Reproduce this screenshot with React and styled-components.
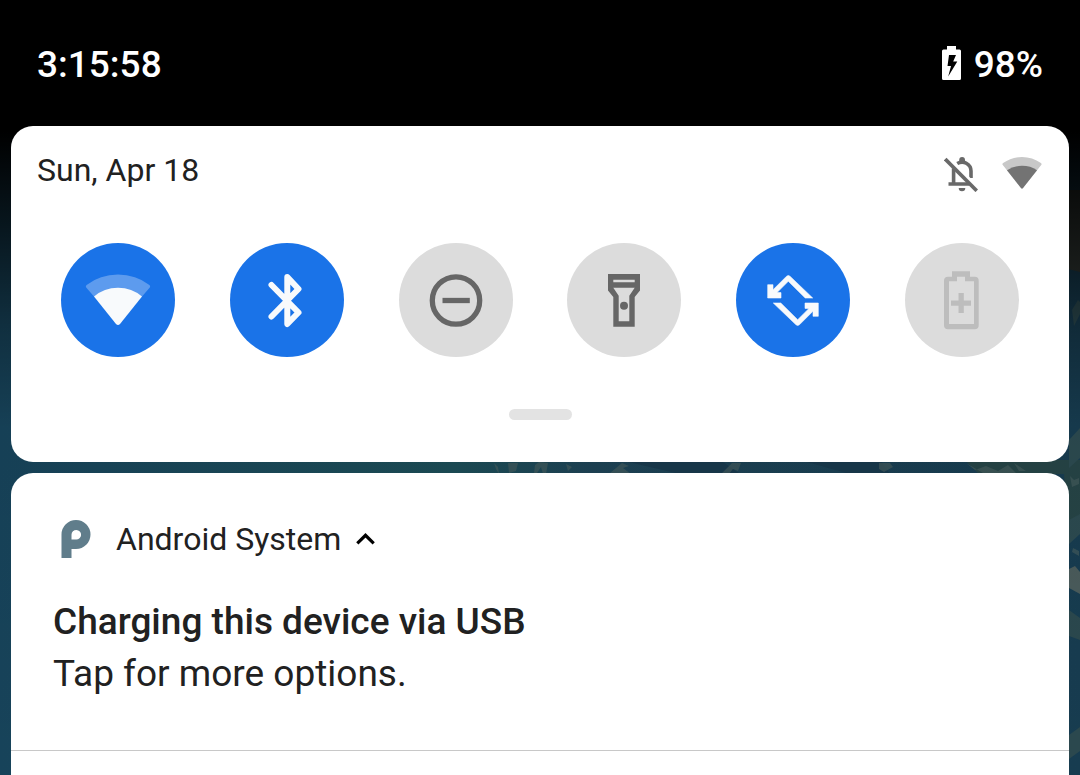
import React from "react";
import styled, { createGlobalStyle } from "styled-components";

const GlobalStyle = createGlobalStyle`
  * { box-sizing: border-box; }
  body {
    margin: 0;
    background: #000;
    font-family: Roboto, "Liberation Sans", sans-serif;
    color: #212121;
  }
  button { font: inherit; color: inherit; border: 0; padding: 0; background: none; cursor: pointer; }
  svg { display: block; flex: none; }
`;

const Screen = styled.div`
  position: relative;
  min-height: 100vh;
  display: flex;
  flex-direction: column;
`;

const WallpaperArt = styled.svg`
  position: absolute;
  inset: 0;
  width: 100%;
  height: 100%;
  z-index: -1;
`;

const StatusBar = styled.header`
  display: flex;
  align-items: center;
  justify-content: space-between;
  padding: 43px 37px 39px;
  line-height: 44px;
  font-size: 37px;
  font-weight: 500;
  color: #fff;
`;

const BatteryStatus = styled.div`
  display: flex;
  align-items: flex-start;
  gap: 13px;

  svg { margin-top: 3px; }
`;

const Shade = styled.main`
  flex: 1;
  display: flex;
  flex-direction: column;
  gap: 11px;
  padding: 0 11px;
`;

const QuickSettings = styled.section`
  display: flex;
  flex-direction: column;
  background: #fff;
  border-radius: 22px;
  padding: 24px 0 42px;
`;

const DateRow = styled.div`
  display: flex;
  justify-content: space-between;
  padding: 0 27px 0 26px;
  line-height: 40px;
  font-size: 32px;
`;

const DateIcons = styled.div`
  display: flex;
  align-items: flex-start;
  gap: 24px;
  padding-top: 7px;
`;

const Tiles = styled.div`
  display: flex;
  justify-content: space-between;
  padding: 51px 50px 52px;
`;

const TileButton = styled.button`
  width: 114px;
  height: 114px;
  border-radius: 50%;
  background: ${(p) => (p.$on ? "#1a73e8" : "#dcdcdc")};
  color: ${(p) => (p.$on ? "#f8fafc" : p.$dim ? "#bdbdbd" : "#666")};
`;

const Handle = styled.button`
  align-self: center;
  width: 63px;
  height: 11px;
  border-radius: 6px;
  && { background: #e3e3e3; }
`;

const Notifications = styled.section`
  flex: 1;
  background: #fff;
  border-radius: 22px 22px 0 0;
`;

const Notification = styled.article`
  padding: 43px 42px 50px;
  border-bottom: 1px solid #c8c8c8;
`;

const AppRow = styled.button`
  display: flex;
  align-items: center;
  && { padding-left: 8px; }
  font-size: 32px;
  line-height: 46px;
`;

const AppName = styled.span`
  margin: 0 15px 0 25px;
`;

const Title = styled.h2`
  margin: 34px 0 0;
  font-size: 37px;
  line-height: 52px;
  font-weight: 500;
`;

const Message = styled.p`
  margin: 0;
  font-size: 37px;
  line-height: 52px;
`;

function Wallpaper() {
  return (
    <WallpaperArt viewBox="0 0 1080 775" preserveAspectRatio="none" aria-hidden="true">
      <defs>
        <linearGradient id="sea" x1="0" x2="1" y1="0" y2="0">
          <stop offset="0" stopColor="#17435a" />
          <stop offset="0.42" stopColor="#1c4c56" />
          <stop offset="0.55" stopColor="#1d4254" />
          <stop offset="1" stopColor="#173c50" />
        </linearGradient>
        <linearGradient id="scrim" x1="0" x2="0" y1="0" y2="1">
          <stop offset="0" stopColor="#000" />
          <stop offset="0.17" stopColor="#000" />
          <stop offset="0.3" stopColor="#000" stopOpacity="0.65" />
          <stop offset="0.42" stopColor="#000" stopOpacity="0.3" />
          <stop offset="0.55" stopColor="#000" stopOpacity="0.05" />
          <stop offset="1" stopColor="#000" stopOpacity="0" />
        </linearGradient>
      </defs>
      <rect width="1080" height="775" fill="url(#sea)" />
      <path d="M620 460l60 14h60l-20-14zM800 460l50 14h40l-10-14z" fill="#18384b" />
      <path d="M965 460h115v70l-12 10-4-66h-85z" fill="#264446" />
      <path d="M1064 190h16v82l-16-4z" fill="#333a36" />
      <path d="M1072 310l6-10 2 2v12l-6 12zM1069 440l11-12v30l-11 10zM1069 520l11-6v20l-11 10z" fill="#2c4a50" />
      <path d="M1069 569l6-3 5 6v22l-11-6z" fill="#4a5b5b" />
      <path d="M1069 610l11 8v22l-11-4zM1069 735l11-8v24l-11 8z" fill="#2b484e" />
      <g fill="#475d5e" opacity="0.6">
        <path d="M494 463l4 4 1 7-3-5zM508 463h10l-2 8-7 2zM535 465l4-3 9 1-2 11h-3l-2-7-4 6h-3zM566 464l6 3-4 4zM610 473l12-10 7 3-6 2 8 6zM722 473l10-10h9l-3 8-5-2-4 5zM879 463h11l3 4-9 5-5-3zM966 463l9 7 11-4 12 5 10-6 8 8h-33zM1014 463l12 8h-7z" />
        <path d="M1070 476l4 4 5-2v6l-7 3zM1073 548l6 3v5l-7-4z" />
      </g>
      <rect width="1080" height="775" fill="url(#scrim)" />
    </WallpaperArt>
  );
}

const BatteryCharging = () => (
  <svg width="19" height="34" viewBox="0 0 19 34" fill="#fff" aria-hidden="true">
    <path
      fillRule="evenodd"
      d="M5 0h9v3.500h3.500Q19 3.500 19 5v27.500Q19 34 17.500 34h-16Q0 34 0 32.500V5q0-1.500 1.500-1.500H5zM7 9L5.500 20H9L6.200 30.500 15.300 15.500H11.200L14 9z"
    />
  </svg>
);

const BellOff = () => (
  <svg width="34" height="35" viewBox="0 0 34 35" fill="none" stroke="#696969" aria-hidden="true">
    <path d="M9.600 11.500V27M4.500 27H25M13.200 6.500Q18 3.800 22.300 6.200 27 8.800 27 14V21" strokeWidth="3.600" />
    <path d="M15.200 4.500V3a2.900 2.900 0 0 1 5.800 0V4.500zM14.700 31h6.600a3.300 3.300 0 0 1-6.600 0z" fill="#696969" stroke="none" />
    <path d="M4.500 0.500L34 30.500" stroke="#fff" strokeWidth="2.500" />
    <path d="M1.200 2L32.800 33.800" strokeWidth="3.700" />
  </svg>
);

const WifiStatus = () => (
  <svg width="40" height="32" viewBox="0 0 40 32" aria-hidden="true">
    <path d="M0.800 8Q-0.100 7 1.100 6.100 9.500 0 20 0T38.900 6.100Q40.100 7 39.200 8L21 31Q20 32.200 19 31z" fill="#c8c8c8" />
    <path d="M5 13.200Q11.500 8.800 20 8.800T35 13.200L21 31Q20 32.200 19 31z" fill="#737373" />
  </svg>
);

const AppLogo = () => (
  <svg width="30" height="38" viewBox="0 0 30 38" fill="#607d8b" aria-hidden="true">
    <path fillRule="evenodd" d="M0.500 38V14.500A14.500 14.500 0 1 1 15 29H10.500v9zM10.500 19.500h4.500A4.800 4.800 0 1 0 10.500 14.700z" />
  </svg>
);

const Chevron = () => (
  <svg width="19" height="12" viewBox="0 0 19 12" fill="none" stroke="#000" strokeWidth="3.200" aria-hidden="true">
    <path d="M1.300 10.300L9.500 2.300l8.200 8" />
  </svg>
);

const glyphs = {
  wifi: (
    <>
      <path d="M25.200 44.500Q24.200 43 25.600 42 39 31.500 57 31.500T88.400 42Q89.800 43 88.800 44.500L80.800 53.800H33.200z" opacity="0.3" />
      <path d="M33 53.500Q43 44.700 57 44.700T81 53.500L59 81Q57 83.200 55 81z" />
    </>
  ),
  bluetooth: (
    <path
      d="M41.500 42L68.500 69.500 57.300 81V34L68.500 46 41.500 73.500"
      fill="none"
      stroke="currentColor"
      strokeWidth="6"
      strokeLinecap="round"
      strokeLinejoin="round"
    />
  ),
  dnd: (
    <g fill="none" stroke="currentColor" strokeWidth="5.300">
      <circle cx="57" cy="57.500" r="23.700" />
      <path d="M43.500 57.500h27.300" />
    </g>
  ),
  flashlight: (
    <>
      <path
        fillRule="evenodd"
        d="M41 31h32v16.500L67.700 54v29.700H46.300V54L41 47.500zM46.300 36.700v2.600h21.400v-2.600zM46.300 44.700L51.700 52.700v25.600h10.600V52.700L67.700 44.700z"
      />
      <circle cx="57" cy="62.700" r="4" />
    </>
  ),
  rotate: (
    <>
      {[0, 180].map((angle) => (
        <path
          key={angle}
          transform={`rotate(${angle} 57 57.5)`}
          d="M31.700 41.700H37V46.800L50.400 33.400Q52.300 31.700 54.200 33.400L76.700 55H69.200L52.300 38.300 41 49.600H45V55H31.700z"
          stroke="currentColor"
          strokeWidth="0.600"
        />
      ))}
    </>
  ),
  saver: (
    <>
      <path
        fillRule="evenodd"
        d="M47 28.300h18v5.400h4.700q4 0 4 4v44.600q0 4-4 4H43q-4 0-4-4V37.700q0-4 4-4h4zM52 33.700v4.600h-8v42.700h25V38.300h-9v-4.600z"
      />
      <path d="M53.500 50h5.300v7.400H66v5.300h-7.200V70h-5.300v-7.300H46v-5.300h7.500z" />
    </>
  ),
};

const tiles = [
  { id: "wifi", label: "Wi-Fi", on: true },
  { id: "bluetooth", label: "Bluetooth", on: true },
  { id: "dnd", label: "Do Not Disturb" },
  { id: "flashlight", label: "Flashlight" },
  { id: "rotate", label: "Auto-rotate", on: true },
  { id: "saver", label: "Battery Saver", dim: true },
];

export default function App() {
  return (
    <Screen>
      <GlobalStyle />
      <Wallpaper />
      <StatusBar>
        <time>3:15:58</time>
        <BatteryStatus>
          <BatteryCharging />
          <span>98%</span>
        </BatteryStatus>
      </StatusBar>
      <Shade>
        <QuickSettings>
          <DateRow>
            <time>Sun, Apr 18</time>
            <DateIcons>
              <BellOff />
              <WifiStatus />
            </DateIcons>
          </DateRow>
          <Tiles>
            {tiles.map((t) => (
              <TileButton key={t.id} $on={t.on} $dim={t.dim} aria-label={t.label} aria-pressed={!!t.on}>
                <svg width="114" height="114" viewBox="0 0 114 114" fill="currentColor" aria-hidden="true">
                  {glyphs[t.id]}
                </svg>
              </TileButton>
            ))}
          </Tiles>
          <Handle aria-label="Expand quick settings" />
        </QuickSettings>
        <Notifications>
          <Notification>
            <AppRow aria-expanded="true">
              <AppLogo />
              <AppName>Android System</AppName>
              <Chevron />
            </AppRow>
            <Title>Charging this device via USB</Title>
            <Message>Tap for more options.</Message>
          </Notification>
        </Notifications>
      </Shade>
    </Screen>
  );
}
